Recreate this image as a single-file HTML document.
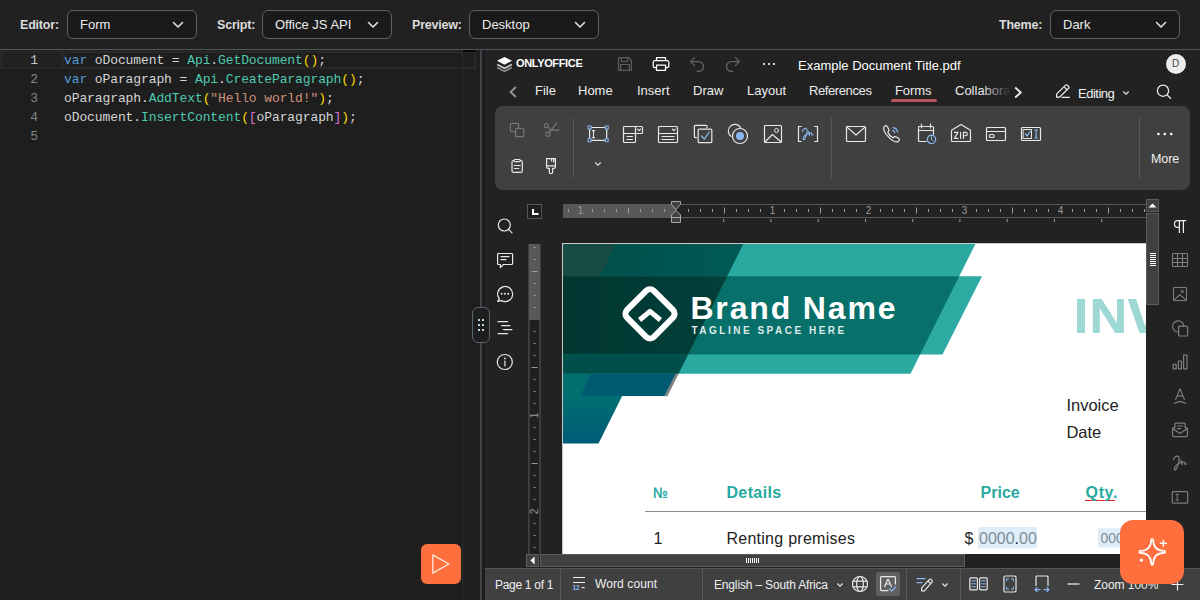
<!DOCTYPE html>
<html>
<head>
<meta charset="utf-8">
<title>ONLYOFFICE Playground</title>
<style>
*{box-sizing:border-box;margin:0;padding:0}
html,body{width:1200px;height:600px;overflow:hidden;background:#212121;font-family:"Liberation Sans",sans-serif;}
.a{position:absolute}
.t{position:absolute;white-space:pre;line-height:1;color:#e6e6e6;font-size:13px}
svg{position:absolute;overflow:visible}
/* top bar */
#topbar{left:0;top:0;width:1200px;height:50px;background:#212121;border-bottom:1px solid #4f565e}
.lbl{font-weight:bold;color:#dcdcdc;font-size:12.5px;letter-spacing:-0.2px;top:19px}
.sel{position:absolute;top:10px;height:29px;width:130px;border:1px solid #5b626a;border-radius:6px;background:#1a1a1a}
.sel .t{left:12px;top:7px;font-size:13px;color:#ececec}
.sel svg{right:12px;top:10px}
/* code */
#code{left:0;top:50px;width:480px;height:550px;background:#1e1e1e}
.ln{position:absolute;margin-top:1px;left:0;width:38px;text-align:right;font-family:"Liberation Mono",monospace;font-size:13px;line-height:19px;color:#858585}
.cl{position:absolute;margin-top:1px;left:64px;font-family:"Liberation Mono",monospace;font-size:13px;letter-spacing:-0.1px;line-height:19px;color:#d4d4d4;white-space:pre}
.k{color:#569cd6}.c{color:#4ec9b0}.y{color:#ffd700}.p{color:#da70d6}.s{color:#ce9178}
/* office */
#office{left:485px;top:50px;width:715px;height:550px;background:#222}

.w{stroke:#e8e8e8;fill:none;stroke-width:1.2;stroke-linecap:round;stroke-linejoin:round}
.d{stroke:#777;fill:none;stroke-width:1.2;stroke-linecap:round;stroke-linejoin:round}
.b{stroke:#8ab8f0;fill:none;stroke-width:1.2;stroke-linecap:round;stroke-linejoin:round}
.tab{font-size:13px;color:#ececec;top:84px}

.g{stroke:#7e7e7e;fill:none;stroke-width:1.2;stroke-linecap:round;stroke-linejoin:round}
.st{font-size:12px;color:#f0f0f0;top:579px}
</style>
</head>
<body>
<!-- TOP BAR -->
<div id="topbar" class="a">
  <div class="t lbl" style="left:20px">Editor:</div>
  <div class="sel" style="left:67px"><div class="t">Form</div><svg width="12" height="8" viewBox="0 0 12 8"><path d="M1.5 1.5 L6 6 L10.5 1.5" fill="none" stroke="#e0e0e0" stroke-width="1.6" stroke-linecap="round" stroke-linejoin="round"/></svg></div>
  <div class="t lbl" style="left:217px">Script:</div>
  <div class="sel" style="left:262px"><div class="t">Office JS API</div><svg width="12" height="8" viewBox="0 0 12 8"><path d="M1.5 1.5 L6 6 L10.5 1.5" fill="none" stroke="#e0e0e0" stroke-width="1.6" stroke-linecap="round" stroke-linejoin="round"/></svg></div>
  <div class="t lbl" style="left:412px">Preview:</div>
  <div class="sel" style="left:469px"><div class="t">Desktop</div><svg width="12" height="8" viewBox="0 0 12 8"><path d="M1.5 1.5 L6 6 L10.5 1.5" fill="none" stroke="#e0e0e0" stroke-width="1.6" stroke-linecap="round" stroke-linejoin="round"/></svg></div>
  <div class="t lbl" style="left:999px">Theme:</div>
  <div class="sel" style="left:1050px"><div class="t">Dark</div><svg width="12" height="8" viewBox="0 0 12 8"><path d="M1.5 1.5 L6 6 L10.5 1.5" fill="none" stroke="#e0e0e0" stroke-width="1.6" stroke-linecap="round" stroke-linejoin="round"/></svg></div>
</div>

<!-- CODE EDITOR -->
<div id="code" class="a">
  <div class="a" style="left:0;top:1px;width:64px;height:18px;border:2px solid #282828;background:#212121"></div>
  <div class="a" style="left:65px;top:1px;width:411px;height:18px;border:2px solid #282828"></div>
  <div class="a" style="left:462px;top:0;width:1px;height:550px;background:#2c2c2c"></div>
  <div class="a" style="left:463px;top:0;width:13px;height:2px;background:#050505"></div>
  <div class="ln" style="top:0;color:#c6c6c6">1</div>
  <div class="ln" style="top:19px">2</div>
  <div class="ln" style="top:38px">3</div>
  <div class="ln" style="top:57px">4</div>
  <div class="ln" style="top:76px">5</div>
  <div class="cl" style="top:0"><span class="k">var</span> oDocument = <span class="c">Api</span>.<span class="c">GetDocument</span><span class="y">()</span>;</div>
  <div class="cl" style="top:19px"><span class="k">var</span> oParagraph = <span class="c">Api</span>.<span class="c">CreateParagraph</span><span class="y">()</span>;</div>
  <div class="cl" style="top:38px">oParagraph.<span class="c">AddText</span><span class="y">(</span><span class="s">"Hello world!"</span><span class="y">)</span>;</div>
  <div class="cl" style="top:57px">oDocument.<span class="c">InsertContent</span><span class="y">(</span><span class="p">[</span>oParagraph<span class="p">]</span><span class="y">)</span>;</div>
  <!-- run button -->
  <div class="a" style="left:421px;top:494px;width:40px;height:40px;background:#ff6f3d;border-radius:6px">
    <svg width="40" height="40" viewBox="0 0 40 40"><path d="M11.8 10.9 L27.9 20 L11.8 29.1 Z" fill="none" stroke="#ffe6dc" stroke-width="1.3" stroke-linejoin="round"/></svg>
  </div>
</div>
<!-- splitter -->
<div class="a" style="left:480px;top:50px;width:2px;height:550px;background:#3e434a"></div>
<div class="a" style="left:482px;top:50px;width:3px;height:550px;background:#1c1c1c"></div>
<div class="a" style="z-index:5;left:472px;top:307px;width:18px;height:36px;border:1px solid #5a6572;border-radius:6px;background:#1e1e1e">
  <svg width="16" height="34" viewBox="0 0 16 34"><g fill="#bcd9de"><rect x="5" y="11" width="2" height="2"/><rect x="9" y="11" width="2" height="2"/><rect x="5" y="16" width="2" height="2"/><rect x="9" y="16" width="2" height="2"/><rect x="5" y="21" width="2" height="2"/><rect x="9" y="21" width="2" height="2"/></g></svg>
</div>


<!-- OFFICE -->
<div id="office" class="a"></div>
<div id="ov" class="a" style="left:0;top:0;width:1200px;height:600px">
<!-- header -->
<svg style="left:496px;top:56px" width="17" height="16" viewBox="0 0 17 16">
  <path d="M8.5 1 L16 4.8 L8.5 8.8 L1 4.8 Z" fill="#fff"/>
  <path d="M1.2 8.6 L8.5 12.3 L15.8 8.6" fill="none" stroke="#cfcfcf" stroke-width="1.7"/>
  <path d="M1.2 11.6 L8.5 15.2 L15.8 11.6" fill="none" stroke="#8c8c8c" stroke-width="1.7"/>
</svg>
<div class="t" style="left:516px;top:58px;font-size:11px;font-weight:bold;letter-spacing:-0.35px;color:#fff">ONLYOFFICE</div>
<!-- save (disabled) -->
<svg style="left:617px;top:56px" width="16" height="16" viewBox="0 0 16 16"><path class="d" style="stroke:#5e5e5e" d="M2.5 1.6 H11.5 L14.4 4.5 V13.4 a1 1 0 0 1 -1 1 H2.5 a1 1 0 0 1 -1 -1 V2.6 a1 1 0 0 1 1 -1 Z M4.5 1.6 V5.5 H10.5 V1.6 M3.6 14.4 V8.5 H12.4 V14.4"/></svg>
<!-- print -->
<svg style="left:652px;top:56px" width="18" height="16" viewBox="0 0 18 16"><path class="w" style="stroke:#fff;stroke-width:1.25" d="M4.5 4.5 V1.7 H13.5 V4.5 M4.5 11.5 H2.8 a1.6 1.6 0 0 1 -1.6 -1.6 V6.2 a1.6 1.6 0 0 1 1.6 -1.6 H15.2 a1.6 1.6 0 0 1 1.6 1.6 V9.9 a1.6 1.6 0 0 1 -1.6 1.6 H13.5 M4.5 9 H13.5 V14.3 H4.5 Z"/></svg>
<!-- undo -->
<svg style="left:689px;top:56px" width="16" height="16" viewBox="0 0 16 16"><path class="d" style="stroke:#666" d="M5.6 1.6 L1.6 5.6 L5.6 9.6 M1.8 5.6 H9.6 a4.9 4.9 0 0 1 0 9.8 H8.2"/></svg>
<!-- redo -->
<svg style="left:725px;top:56px" width="16" height="16" viewBox="0 0 16 16"><path class="d" style="stroke:#666" d="M10.4 1.6 L14.4 5.6 L10.4 9.6 M14.2 5.6 H6.4 a4.9 4.9 0 0 0 0 9.8 H7.8"/></svg>
<!-- dots -->
<svg style="left:761px;top:62px" width="16" height="4" viewBox="0 0 16 4"><circle cx="3" cy="2" r="1.05" fill="#fff"/><circle cx="8" cy="2" r="1.05" fill="#fff"/><circle cx="13" cy="2" r="1.05" fill="#fff"/></svg>
<div class="t" style="left:798px;top:59px;font-size:13px;color:#fff">Example Document Title.pdf</div>
<div class="a" style="left:1166px;top:54px;width:20px;height:20px;border-radius:10px;background:#ededed"></div>
<div class="t" style="left:1172px;top:59px;font-size:10px;color:#444">D</div>
<!-- tabs -->
<svg style="left:508px;top:85px" width="10" height="14" viewBox="0 0 10 14"><path d="M8 2 L2.5 7 L8 12" fill="none" stroke="#9a9a9a" stroke-width="1.7"/></svg>
<div class="t tab" style="left:535px">File</div>
<div class="t tab" style="left:578px">Home</div>
<div class="t tab" style="left:637px">Insert</div>
<div class="t tab" style="left:693px">Draw</div>
<div class="t tab" style="left:747px">Layout</div>
<div class="t tab" style="left:809px;letter-spacing:-0.4px">References</div>
<div class="t tab" style="left:895px;letter-spacing:-0.1px">Forms</div>
<div class="a" style="left:891px;top:99px;width:46px;height:3px;border-radius:1.5px;background:#b9555f"></div>
<div class="a" style="left:955px;top:80px;width:56px;height:22px;overflow:hidden"><div class="t tab" style="left:0;top:4px">Collaboration</div><div class="a" style="left:26px;top:0;width:30px;height:22px;background:linear-gradient(90deg,rgba(34,34,34,0),rgba(34,34,34,0.85) 85%,#222)"></div></div>
<svg style="left:1013px;top:86px" width="10" height="13" viewBox="0 0 10 13"><path d="M2.2 1.5 L7.8 6.5 L2.2 11.5" fill="none" stroke="#f0f0f0" stroke-width="1.8"/></svg>
<!-- editing -->
<svg style="left:1055px;top:83px" width="16" height="16" viewBox="0 0 16 16"><path class="w" style="stroke:#f0f0f0;stroke-width:1.2" d="M1.6 14.2 V11.2 L10.6 2.2 a1.2 1.2 0 0 1 1.7 0 L13.6 3.5 a1.2 1.2 0 0 1 0 1.7 L4.6 14.2 Z M9 3.8 L12 6.8 M7 14.3 H14.5"/></svg>
<div class="t" style="left:1078px;top:87px;font-size:13px;letter-spacing:-0.5px;color:#f0f0f0">Editing</div>
<svg style="left:1122px;top:90px" width="8" height="6" viewBox="0 0 8 6"><path d="M1.3 1.5 L4 4.2 L6.7 1.5" fill="none" stroke="#e0e0e0" stroke-width="1.3"/></svg>
<svg style="left:1155px;top:83px" width="18" height="18" viewBox="0 0 18 18"><circle cx="8" cy="7.7" r="5.6" fill="none" stroke="#f0f0f0" stroke-width="1.3"/><path d="M12 11.8 L16 15.8" stroke="#f0f0f0" stroke-width="1.3" fill="none"/></svg>
<!-- toolbar panel -->
<div class="a" style="left:495px;top:106px;width:695px;height:84px;border-radius:8px;background:#404040"></div>
<div class="a" style="left:573px;top:118px;width:1px;height:60px;background:#585858"></div>
<div class="a" style="left:831px;top:118px;width:1px;height:60px;background:#585858"></div>
<div class="a" style="left:1139px;top:118px;width:1px;height:60px;background:#585858"></div>
<!-- copy (disabled) -->
<svg style="left:509px;top:122px" width="16" height="16" viewBox="0 0 16 16"><path class="d" d="M6.5 9.6 H2.4 a1 1 0 0 1 -1 -1 V2.4 a1 1 0 0 1 1 -1 H8.6 a1 1 0 0 1 1 1 V6.3"/><rect class="d" x="6.6" y="6.5" width="8.2" height="8.2" rx="1"/></svg>
<!-- cut (disabled) -->
<svg style="left:543px;top:122px" width="17" height="16" viewBox="0 0 17 16"><circle class="d" cx="3.3" cy="3.6" r="2.1"/><circle class="d" cx="5" cy="12.3" r="2.1"/><path class="d" d="M5 5 L7.6 8.4 M6.2 10.6 L13.5 1.2 M9 8.2 H16"/></svg>
<!-- paste -->
<svg style="left:510px;top:158px" width="15" height="16" viewBox="0 0 15 16"><rect class="w" x="2" y="2.5" width="10.3" height="11.9" rx="1.6"/><rect class="w" x="3.9" y="1.5" width="6.5" height="2.2" rx="1.1" style="fill:#404040"/><path class="w" d="M4.4 7.5 H10.2 M4.4 10.5 H8.8"/></svg>
<!-- format painter -->
<svg style="left:544px;top:157px" width="14" height="18" viewBox="0 0 14 18"><path class="w" d="M2.6 1.7 H11.4 V10 a1.3 1.3 0 0 1 -1.3 1.3 H8.6 V15.4 a1.1 1.1 0 0 1 -1.1 1.1 H6.5 a1.1 1.1 0 0 1 -1.1 -1.1 V11.3 H3.9 a1.3 1.3 0 0 1 -1.3 -1.3 Z M2.6 8.8 H11.4 M7.6 1.7 V4 M9.7 1.7 V5"/></svg>
<!-- text field -->
<svg style="left:587px;top:125px" width="22" height="18" viewBox="0 0 22 18"><rect class="w" x="2.6" y="2.5" width="17.1" height="12.8"/><path class="w" style="stroke-width:1.1" d="M5.3 5.6 H7.7 M6.5 5.6 V12.8 M5.3 12.8 H7.7"/><g class="b" style="fill:#404040;stroke-width:1;stroke-linejoin:miter"><rect x="1.1" y="1" width="3" height="3"/><rect x="18.2" y="1" width="3" height="3"/><rect x="1.1" y="13.8" width="3" height="3"/><rect x="18.2" y="13.8" width="3" height="3"/></g></svg>
<svg style="left:594px;top:161px" width="8" height="6" viewBox="0 0 8 6"><path d="M1.2 1.4 L4 4.2 L6.8 1.4" fill="none" stroke="#e0e0e0" stroke-width="1.3"/></svg>
<!-- combo box -->
<svg style="left:622px;top:125px" width="22" height="19" viewBox="0 0 22 19"><path class="w" d="M2.5 1.5 H19.5 a1 1 0 0 1 1 1 V7.5 a1 1 0 0 1 -1 1 H2.5 a1 1 0 0 1 -1 -1 V2.5 a1 1 0 0 1 1 -1 Z M13.5 1.5 V8.5 M15.6 4.2 L17.1 5.7 L18.6 4.2 M1.5 8 V16.5 a1 1 0 0 0 1 1 H12.5 a1 1 0 0 0 1 -1 V8.5 M5 11.5 H10.5 M5 14.5 H10.5"/></svg>
<!-- dropdown -->
<svg style="left:657px;top:125px" width="22" height="19" viewBox="0 0 22 19"><path class="w" d="M2.5 1.5 H19.5 a1 1 0 0 1 1 1 V7.5 a1 1 0 0 1 -1 1 H2.5 a1 1 0 0 1 -1 -1 V2.5 a1 1 0 0 1 1 -1 Z M15.4 4.2 L16.9 5.7 L18.4 4.2 M1.5 8 V16.5 a1 1 0 0 0 1 1 H19.5 a1 1 0 0 0 1 -1 V8 M5 11.5 H17 M5 14.5 H17"/></svg>
<!-- checkbox -->
<svg style="left:693px;top:124px" width="20" height="20" viewBox="0 0 20 20"><path class="w" d="M3.6 13.6 H2.4 a1 1 0 0 1 -1 -1 V2.3 a1 1 0 0 1 1 -1 H13 a1 1 0 0 1 1 1 V3.6"/><rect class="w" x="5.2" y="5.1" width="13.6" height="13.6" rx="1"/><path class="b" d="M8.4 12 L11.3 15.2 L16.2 8"/></svg>
<!-- radio -->
<svg style="left:727px;top:123px" width="22" height="22" viewBox="0 0 22 22"><path class="w" d="M4.2 13.4 A6.6 6.6 0 1 1 13.6 4.6"/><circle class="w" cx="13" cy="13" r="7.5"/><circle cx="13" cy="13" r="4" fill="#8ab8f0"/></svg>
<!-- image -->
<svg style="left:763px;top:124px" width="20" height="20" viewBox="0 0 20 20"><rect class="w" x="1.5" y="1.5" width="17" height="17" rx="1"/><circle class="w" style="stroke-width:1" cx="13.5" cy="6.5" r="2"/><path class="w" d="M2.5 17.5 L9.3 10.5 L17.6 17.5"/></svg>
<!-- signature -->
<svg style="left:797px;top:125px" width="22" height="18" viewBox="0 0 22 18"><path class="w" d="M4.2 1.5 H1.5 V16.5 H4.2 M17.8 1.5 H20.5 V16.5 H17.8"/><path class="b" style="stroke-width:1.1" d="M5.4 6.4 C5.8 4 8.6 2.6 9.6 4 C10.8 5.8 9.4 10.6 8 13.4 C7.2 15 6 15 6.2 13.4 C6.6 10.8 10 8.8 12.4 8 M11.6 6.4 L12.4 10.6 M12.6 8.6 C13.6 7.4 14.8 7.6 14.6 9 C14.6 10 15.4 10.2 16 9.6"/></svg>
<!-- email -->
<svg style="left:845px;top:125px" width="22" height="18" viewBox="0 0 22 18"><rect class="w" x="1.5" y="1.5" width="19" height="15" rx="1"/><path class="w" d="M2.3 2.4 L11 10 L19.7 2.4"/></svg>
<!-- phone -->
<svg style="left:881px;top:124px" width="20" height="20" viewBox="0 0 20 20"><path class="w" d="M3.2 2.6 C4.6 1.2 5.6 1.4 6.4 2.8 L7.8 5.4 C8.4 6.6 8 7.2 6.8 8.2 C7.6 10.4 9.6 12.6 12 13.8 C13 12.6 13.6 12.2 14.8 12.8 L17.4 14.2 C18.8 15 18.8 16 17.6 17.2 C13.6 20.6 0.4 8.4 3.2 2.6 Z"/><path class="b" d="M11.6 6.4 C12.8 6.6 13.6 7.4 13.8 8.6 M12.2 3.6 C14.6 4 16.2 5.6 16.6 8"/></svg>
<!-- date -->
<svg style="left:917px;top:123px" width="20" height="22" viewBox="0 0 20 22"><path class="w" d="M9.4 18.5 H2.5 a1 1 0 0 1 -1 -1 V4.5 a1 1 0 0 1 1 -1 H15.5 a1 1 0 0 1 1 1 V11.2 M1.5 7.5 H16.5 M4.5 1.2 V5 M13.5 1.2 V5"/><circle class="b" cx="14.5" cy="16.3" r="4.2"/><path class="b" style="stroke-width:1" d="M14.5 13.9 V16.5 L16.1 17.5"/></svg>
<!-- zip -->
<svg style="left:950px;top:123px" width="22" height="20" viewBox="0 0 22 20"><path class="w" d="M1.5 7.2 L11 1.5 L20.5 7.2 V17.5 a1 1 0 0 1 -1 1 H2.5 a1 1 0 0 1 -1 -1 Z"/><path class="w" style="stroke-width:1.1" d="M4.4 9.4 H8 L4.4 15.4 H8 M10.6 9.4 V15.4 M13.4 15.4 V9.4 H15.6 a1.7 1.7 0 0 1 0 3.4 H13.4"/></svg>
<!-- credit card -->
<svg style="left:985px;top:126px" width="22" height="16" viewBox="0 0 22 16"><rect class="w" x="1.5" y="1.5" width="19" height="13" rx="1"/><path class="w" d="M1.5 5.5 H20.5"/><rect class="w" x="4.5" y="8.5" width="4.5" height="3" rx="1"/></svg>
<!-- complex -->
<svg style="left:1020px;top:126px" width="22" height="16" viewBox="0 0 22 16"><rect class="w" x="1.5" y="1.5" width="19" height="13" rx="1"/><rect class="w" style="stroke-width:1" x="3.5" y="3.5" width="8" height="9"/><path class="b" d="M5.4 8 L7.2 10 L10.2 5.6 M14.8 4 H17.4 M16.1 4 V12 M14.8 12 H17.4"/></svg>
<!-- more -->
<svg style="left:1156px;top:132px" width="18" height="4" viewBox="0 0 18 4"><circle cx="2.4" cy="2" r="1.3" fill="#fff"/><circle cx="8.8" cy="2" r="1.3" fill="#fff"/><circle cx="15.2" cy="2" r="1.3" fill="#fff"/></svg>
<div class="t" style="left:1151px;top:152.5px;font-size:12.5px;letter-spacing:-0.1px;color:#f0f0f0">More</div>

<!-- document page -->
<div class="a" style="left:562px;top:243px;width:584px;height:311px;background:#fff;overflow:hidden;border-left:1px solid #c8c8c8;border-top:1px solid #c8c8c8"></div>
<svg style="left:0;top:0" width="1200" height="600" viewBox="0 0 1200 600">
 <defs>
  <clipPath id="pg"><rect x="563" y="244" width="583" height="310"/></clipPath>
  <linearGradient id="gd" x1="0" y1="0" x2="0" y2="1"><stop offset="0" stop-color="#007a76"/><stop offset="0.5" stop-color="#006a72"/><stop offset="1" stop-color="#005a76"/></linearGradient>
  <linearGradient id="g2" x1="0" y1="0" x2="1" y2="0"><stop offset="0" stop-color="#004c48"/><stop offset="1" stop-color="#005a55"/></linearGradient>
  <linearGradient id="g3" x1="0" y1="0" x2="1" y2="0"><stop offset="0" stop-color="#013631"/><stop offset="1" stop-color="#024039"/></linearGradient>
 </defs>
 <g clip-path="url(#pg)">
  <!-- band (on white) -->
  <polygon points="563,276.2 982,276.2 942.5,354.5 563,354.5" fill="#2daaa1"/>
  <!-- A light teal -->
  <polygon points="563,244 975.4,244 910.5,373.7 563,373.7" fill="#29a9a0"/>
  <!-- band over A -->
  <polygon points="563,276.2 959.2,276.2 920.1,354.5 563,354.5" fill="#08706a"/>
  <!-- lower-left gradient shape -->
  <polygon points="563,373.7 633.2,373.7 598.5,443.6 563,443.6" fill="url(#gd)"/>
  <!-- shadow -->
  <polygon points="675,373.7 678.6,373.7 667.4,396.2 664.6,396.2" fill="#7f8383"/>
  <!-- blue part under overlay -->
  <polygon points="563,373.7 675.6,373.7 664.6,396 563,396" fill="#005a72"/>
  <polygon points="563,373.7 591,373.7 580.4,396 563,396" fill="#006f6d"/>
  <!-- dark overlay over A top strip -->
  <polygon points="563,244 743.3,244 727.2,276.2 563,276.2" fill="url(#g2)"/>
  <polygon points="563,244 615.5,244 600,276.2 563,276.2" fill="#164b46"/>
  <!-- dark overlay over band -->
  <polygon points="563,276.2 727.2,276.2 688.1,354.5 563,354.5" fill="url(#g3)"/>
  <!-- dark overlay over A bottom strip -->
  <polygon points="563,354.5 688.1,354.5 678.5,373.7 563,373.7" fill="#004f4b"/>
  <!-- logo -->
  <rect x="-19" y="-19" width="38" height="38" rx="5.5" transform="translate(650,313.8) rotate(45)" fill="none" stroke="#fff" stroke-width="6"/>
  <path d="M639.6 320 L650 311.4 L660.4 320" fill="none" stroke="#fff" stroke-width="5" stroke-linejoin="round"/>
  <!-- INV -->
  <g fill="#9ed8d4">
   <rect x="1077" y="298.9" width="8" height="34"/>
   <path d="M1092.8 298.9 H1101.6 L1117 323 V298.9 H1123.9 V332.9 H1115.2 L1099.8 308.6 V332.9 H1092.8 Z"/>
   <path d="M1127.6 298.9 H1136.1 L1145 326 L1153.9 298.9 H1162 L1150 332.9 H1139.6 Z"/>
  </g>
  <!-- table line -->
  <rect x="645" y="511" width="520" height="1" fill="#8c8c8c"/>
  <!-- form field bgs -->
  <rect x="978" y="527" width="59" height="21.4" fill="#ddeefa"/>
  <rect x="1098" y="528.2" width="50" height="19.4" fill="#ddeefa"/>
  <rect x="1085" y="500" width="30" height="1" fill="#e8202a"/>
 </g>
</svg>
<div class="a" style="left:563px;top:244px;width:583px;height:310px;overflow:hidden">
 <div class="t" id="brand" style="left:127.4px;top:47.8px;font-size:32px;font-weight:bold;letter-spacing:1.85px;color:#fff">Brand Name</div>
 <div class="t" id="tag" style="left:128.5px;top:82px;font-size:10px;font-weight:bold;letter-spacing:2.5px;color:#dfeae8">TAGLINE SPACE HERE</div>
 <div class="t" style="left:503.4px;top:152.6px;font-size:16.5px;color:#222">Invoice</div>
 <div class="t" style="left:503.4px;top:180.3px;font-size:16.5px;color:#222">Date</div>
 <div class="t" style="left:90.4px;top:240.7px;font-size:15.5px;font-weight:bold;color:#29a9a0;transform-origin:0 0;transform:scaleX(0.86)">№</div>
 <div class="t" style="left:163.4px;top:240.7px;font-size:16px;font-weight:bold;letter-spacing:0.4px;color:#29a9a0">Details</div>
 <div class="t" style="left:417.6px;top:240.7px;font-size:16px;font-weight:bold;color:#29a9a0">Price</div>
 <div class="t" style="left:522.6px;top:240.7px;font-size:16px;font-weight:bold;letter-spacing:0.6px;color:#29a9a0">Qty.</div>
 <div class="t" style="left:90.6px;top:286.8px;font-size:16px;color:#222">1</div>
 <div class="t" style="left:163.4px;top:286.8px;font-size:16px;letter-spacing:0.27px;color:#222">Renting premises</div>
 <div class="t" style="left:401.4px;top:286.8px;font-size:16px;color:#222">$</div>
 <div class="t" style="left:416px;top:286.8px;font-size:16px;color:#7f8d95">0000<span style="color:#222">.</span>00</div>
 <div class="t" style="left:537.4px;top:286.5px;font-size:14px;color:#7f8d95">0000</div>
</div>


<!-- rulers -->
<div class="a" style="left:527px;top:204px;width:15px;height:15px;border:1px solid #555;background:#1e1e1e"></div>
<svg style="left:0;top:0" width="1200" height="600" viewBox="0 0 1200 600">
  <path d="M533 209 V214 H538.5" fill="none" stroke="#fff" stroke-width="2"/>
  <rect x="563" y="204" width="113.5" height="14" fill="#585858"/>
  <path d="M676.5 204.5 H1146 M676.5 217.5 H1146" fill="none" stroke="#585858" stroke-width="1"/>
  <rect x="568.0" y="209" width="1" height="3" fill="#9a9a9a"/><rect x="592.0" y="209" width="1" height="3" fill="#9a9a9a"/><rect x="604.0" y="209" width="1" height="3" fill="#9a9a9a"/><rect x="616.0" y="209" width="1" height="3" fill="#9a9a9a"/><rect x="628.0" y="207.5" width="1" height="6" fill="#9a9a9a"/><rect x="640.0" y="209" width="1" height="3" fill="#9a9a9a"/><rect x="652.0" y="209" width="1" height="3" fill="#9a9a9a"/><rect x="664.0" y="209" width="1" height="3" fill="#9a9a9a"/><rect x="688.0" y="209" width="1" height="3" fill="#9a9a9a"/><rect x="700.0" y="209" width="1" height="3" fill="#9a9a9a"/><rect x="712.0" y="209" width="1" height="3" fill="#9a9a9a"/><rect x="724.0" y="207.5" width="1" height="6" fill="#9a9a9a"/><rect x="736.0" y="209" width="1" height="3" fill="#9a9a9a"/><rect x="748.0" y="209" width="1" height="3" fill="#9a9a9a"/><rect x="760.0" y="209" width="1" height="3" fill="#9a9a9a"/><rect x="784.0" y="209" width="1" height="3" fill="#9a9a9a"/><rect x="796.0" y="209" width="1" height="3" fill="#9a9a9a"/><rect x="808.0" y="209" width="1" height="3" fill="#9a9a9a"/><rect x="820.0" y="207.5" width="1" height="6" fill="#9a9a9a"/><rect x="832.0" y="209" width="1" height="3" fill="#9a9a9a"/><rect x="844.0" y="209" width="1" height="3" fill="#9a9a9a"/><rect x="856.0" y="209" width="1" height="3" fill="#9a9a9a"/><rect x="880.0" y="209" width="1" height="3" fill="#9a9a9a"/><rect x="892.0" y="209" width="1" height="3" fill="#9a9a9a"/><rect x="904.0" y="209" width="1" height="3" fill="#9a9a9a"/><rect x="916.0" y="207.5" width="1" height="6" fill="#9a9a9a"/><rect x="928.0" y="209" width="1" height="3" fill="#9a9a9a"/><rect x="940.0" y="209" width="1" height="3" fill="#9a9a9a"/><rect x="952.0" y="209" width="1" height="3" fill="#9a9a9a"/><rect x="976.0" y="209" width="1" height="3" fill="#9a9a9a"/><rect x="988.0" y="209" width="1" height="3" fill="#9a9a9a"/><rect x="1000.0" y="209" width="1" height="3" fill="#9a9a9a"/><rect x="1012.0" y="207.5" width="1" height="6" fill="#9a9a9a"/><rect x="1024.0" y="209" width="1" height="3" fill="#9a9a9a"/><rect x="1036.0" y="209" width="1" height="3" fill="#9a9a9a"/><rect x="1048.0" y="209" width="1" height="3" fill="#9a9a9a"/><rect x="1072.0" y="209" width="1" height="3" fill="#9a9a9a"/><rect x="1084.0" y="209" width="1" height="3" fill="#9a9a9a"/><rect x="1096.0" y="209" width="1" height="3" fill="#9a9a9a"/><rect x="1108.0" y="207.5" width="1" height="6" fill="#9a9a9a"/><rect x="1120.0" y="209" width="1" height="3" fill="#9a9a9a"/><rect x="1132.0" y="209" width="1" height="3" fill="#9a9a9a"/><rect x="1144.0" y="209" width="1" height="3" fill="#9a9a9a"/><text x="580.5" y="214.3" font-size="10" fill="#9a9a9a" text-anchor="middle" font-family="Liberation Sans">1</text><text x="772.5" y="214.3" font-size="10" fill="#9a9a9a" text-anchor="middle" font-family="Liberation Sans">1</text><text x="868.5" y="214.3" font-size="10" fill="#9a9a9a" text-anchor="middle" font-family="Liberation Sans">2</text><text x="964.5" y="214.3" font-size="10" fill="#9a9a9a" text-anchor="middle" font-family="Liberation Sans">3</text><text x="1060.5" y="214.3" font-size="10" fill="#9a9a9a" text-anchor="middle" font-family="Liberation Sans">4</text>
  <rect x="723.2" y="219" width="1" height="3" fill="#9a9a9a"/><rect x="770.5" y="219" width="1" height="3" fill="#9a9a9a"/><rect x="817.7" y="219" width="1" height="3" fill="#9a9a9a"/><rect x="865.0" y="219" width="1" height="3" fill="#9a9a9a"/><rect x="912.2" y="219" width="1" height="3" fill="#9a9a9a"/><rect x="959.4" y="219" width="1" height="3" fill="#9a9a9a"/><rect x="1006.7" y="219" width="1" height="3" fill="#9a9a9a"/><rect x="1053.9" y="219" width="1" height="3" fill="#9a9a9a"/><rect x="1101.2" y="219" width="1" height="3" fill="#9a9a9a"/>
  <path d="M671.5 201.5 H680.5 V204.5 L676 209.5 L671.5 204.5 Z M676 210.5 L680.5 215 V222.5 H671.5 V215 Z M671.5 217.5 H680.5" fill="#404040" stroke="#a8a8a8" stroke-width="1" stroke-linejoin="round"/>
  <rect x="528.5" y="244" width="12" height="75.5" fill="#585858"/>
  <path d="M529 554 V319.5 H540 V554" fill="#1f1f1f" stroke="#585858" stroke-width="1"/>
  <rect x="533.5" y="247.0" width="2" height="1" fill="#9a9a9a"/><rect x="533.5" y="259.0" width="2" height="1" fill="#9a9a9a"/><rect x="531.5" y="271.0" width="6" height="1" fill="#9a9a9a"/><rect x="533.5" y="283.0" width="2" height="1" fill="#9a9a9a"/><rect x="533.5" y="295.0" width="2" height="1" fill="#9a9a9a"/><rect x="533.5" y="307.0" width="2" height="1" fill="#9a9a9a"/><rect x="533.5" y="331.0" width="2" height="1" fill="#9a9a9a"/><rect x="533.5" y="343.0" width="2" height="1" fill="#9a9a9a"/><rect x="533.5" y="355.0" width="2" height="1" fill="#9a9a9a"/><rect x="531.5" y="367.0" width="6" height="1" fill="#9a9a9a"/><rect x="533.5" y="379.0" width="2" height="1" fill="#9a9a9a"/><rect x="533.5" y="391.0" width="2" height="1" fill="#9a9a9a"/><rect x="533.5" y="403.0" width="2" height="1" fill="#9a9a9a"/><text x="0" y="0" transform="translate(537.6,415.5) rotate(-90)" font-size="10" fill="#9a9a9a" text-anchor="middle" font-family="Liberation Sans">1</text><rect x="533.5" y="427.0" width="2" height="1" fill="#9a9a9a"/><rect x="533.5" y="439.0" width="2" height="1" fill="#9a9a9a"/><rect x="533.5" y="451.0" width="2" height="1" fill="#9a9a9a"/><rect x="531.5" y="463.0" width="6" height="1" fill="#9a9a9a"/><rect x="533.5" y="475.0" width="2" height="1" fill="#9a9a9a"/><rect x="533.5" y="487.0" width="2" height="1" fill="#9a9a9a"/><rect x="533.5" y="499.0" width="2" height="1" fill="#9a9a9a"/><text x="0" y="0" transform="translate(537.6,511.5) rotate(-90)" font-size="10" fill="#9a9a9a" text-anchor="middle" font-family="Liberation Sans">2</text><rect x="533.5" y="523.0" width="2" height="1" fill="#9a9a9a"/><rect x="533.5" y="535.0" width="2" height="1" fill="#9a9a9a"/><rect x="533.5" y="547.0" width="2" height="1" fill="#9a9a9a"/>
</svg>
<!-- left sidebar -->
<svg style="left:496px;top:217px" width="18" height="18" viewBox="0 0 18 18"><circle class="w" cx="8.3" cy="8" r="6"/><path class="w" d="M12.6 12.4 L16 15.8"/></svg>
<svg style="left:496px;top:252px" width="18" height="17" viewBox="0 0 18 17"><path class="w" d="M2.6 1.5 H15.6 a1 1 0 0 1 1 1 V11.5 a1 1 0 0 1 -1 1 H7.4 L4.4 15.6 V12.5 H2.6 a1 1 0 0 1 -1 -1 V2.5 a1 1 0 0 1 1 -1 Z M5 4.6 H13 M5 7.6 H10"/></svg>
<svg style="left:496px;top:285px" width="18" height="18" viewBox="0 0 18 18"><path class="w" d="M3.4 13.8 A7.5 7.5 0 1 1 5.6 15.6 L1.6 16.4 Z"/><circle cx="5.6" cy="8.7" r="1" fill="#e8e8e8"/><circle cx="8.9" cy="8.7" r="1" fill="#e8e8e8"/><circle cx="12.2" cy="8.7" r="1" fill="#e8e8e8"/></svg>
<svg style="left:496px;top:320px" width="18" height="16" viewBox="0 0 18 16"><path class="w" d="M2 1.7 H11.6 M5.6 5.6 H14 M7.4 9.6 H16 M2 13.6 H11.6"/></svg>
<svg style="left:496px;top:353px" width="18" height="18" viewBox="0 0 18 18"><circle class="w" cx="8.8" cy="9" r="7.5"/><path class="w" d="M8.9 8 V13"/><circle cx="8.9" cy="5.4" r="0.9" fill="#e8e8e8"/></svg>
<!-- vertical scrollbar -->
<div class="a" style="left:1146px;top:199px;width:13px;height:13px;background:#404040;border:1px solid #5c5c5c"></div>
<svg style="left:1148px;top:203px" width="9" height="5" viewBox="0 0 9 5"><path d="M0.5 4.6 L4.5 0.4 L8.5 4.6 Z" fill="#fff"/></svg>
<div class="a" style="left:1146px;top:213px;width:13px;height:92px;background:#404040;border:1px solid #5c5c5c"></div>
<svg style="left:1150px;top:253px" width="6" height="14" viewBox="0 0 6 14"><path d="M0 0.5 H6 M0 2.5 H6 M0 4.5 H6 M0 6.5 H6 M0 8.5 H6 M0 10.5 H6 M0 12.5 H6" stroke="#fff" stroke-width="1" shape-rendering="crispEdges"/></svg>
<!-- right sidebar -->
<svg style="left:1172px;top:219px" width="16" height="16" viewBox="0 0 16 16"><path d="M7.4 14 V1.6 M11.4 14 V1.6 M14.2 1.6 H5.8 a3.4 3.4 0 0 0 0 6.8 H7.4" fill="none" stroke="#f0f0f0" stroke-width="1.2"/></svg>
<svg style="left:1171px;top:252px" width="18" height="16" viewBox="0 0 18 16"><path class="g" style="stroke-width:1.1" d="M2.5 1.5 H15.5 a1 1 0 0 1 1 1 V13.5 a1 1 0 0 1 -1 1 H2.5 a1 1 0 0 1 -1 -1 V2.5 a1 1 0 0 1 1 -1 Z M1.5 6.5 H16.5 M1.5 10.5 H16.5 M6.5 1.5 V14.5 M11.5 1.5 V14.5"/></svg>
<svg style="left:1172px;top:286px" width="16" height="16" viewBox="0 0 16 16"><rect class="g" style="stroke-width:1.1" x="1.5" y="1.5" width="13" height="13" rx="1"/><circle class="g" style="stroke-width:1" cx="10.2" cy="5.5" r="1.3"/><path class="g" style="stroke-width:1.1" d="M2.3 13.6 L7.7 8.8 L13.7 13.6"/></svg>
<svg style="left:1171px;top:320px" width="18" height="18" viewBox="0 0 18 18"><path class="g" d="M7.6 12 A5.6 5.6 0 1 1 12.8 6.2"/><rect class="g" x="7.6" y="6.2" width="9" height="9.8" rx="1"/></svg>
<svg style="left:1172px;top:354px" width="16" height="16" viewBox="0 0 16 16"><rect class="g" x="1.2" y="10.4" width="3" height="4.4"/><rect class="g" x="6.4" y="7" width="3" height="7.8"/><rect class="g" x="11.6" y="1.2" width="3.4" height="13.6"/></svg>
<svg style="left:1172px;top:387px" width="16" height="18" viewBox="0 0 16 18"><path class="g" d="M3.6 12.6 L8 1.6 L12.4 12.6 M5.2 8.8 H10.8 M2.4 16.4 Q8 13 13.6 16.4"/></svg>
<svg style="left:1171px;top:422px" width="18" height="16" viewBox="0 0 18 16"><path class="g" d="M3.8 6 V2.2 a1 1 0 0 1 1 -1 H13.2 a1 1 0 0 1 1 1 V6 M1.6 6.4 L3.8 5 M16.4 6.4 L14.2 5 M1.6 6.4 V13.6 a1 1 0 0 0 1 1 H15.4 a1 1 0 0 0 1 -1 V6.4 L9 11.4 Z M6.4 4 H11.6 M6.4 6.6 H9.6"/></svg>
<svg style="left:1172px;top:454px" width="16" height="18" viewBox="0 0 16 18"><path class="g" d="M1.6 5.6 C2.2 2.4 6 1 6.8 3 C7.8 5.4 6.2 11.6 4.4 14.8 C3.4 16.6 2 16.4 2.4 14.4 C3 11.4 7 9 10 8 M9 6.2 L10 11 M10.2 8.8 C11.2 7.4 12.8 7.6 12.6 9.2 C12.6 10.4 13.6 10.6 14.6 9.8"/></svg>
<svg style="left:1171px;top:490px" width="18" height="15" viewBox="0 0 18 15"><rect class="g" x="1.3" y="1.6" width="15.4" height="11.6" rx="1"/><path class="g" style="stroke-width:1" d="M5 4.6 H7.4 M6.2 4.6 V10.2 M5 10.2 H7.4"/></svg>
<!-- h scrollbar -->
<div class="a" style="left:526px;top:554px;width:13px;height:13px;background:#404040;border:1px solid #5c5c5c"></div>
<svg style="left:530px;top:556px" width="5" height="9" viewBox="0 0 5 9"><path d="M4.6 0.5 L0.4 4.5 L4.6 8.5 Z" fill="#fff"/></svg>
<div class="a" style="left:540px;top:554px;width:425px;height:13px;background:#404040;border:1px solid #5c5c5c"></div>
<svg style="left:746px;top:558px" width="14" height="5" viewBox="0 0 14 5"><path d="M0.5 0 V5 M2.5 0 V5 M4.5 0 V5 M6.5 0 V5 M8.5 0 V5 M10.5 0 V5 M12.5 0 V5" stroke="#fff" stroke-width="1" shape-rendering="crispEdges"/></svg>
<!-- status bar -->
<div class="a" style="left:485px;top:568px;width:715px;height:32px;background:#404040;border-top:1px solid #555"></div>
<div class="a" style="left:560px;top:569px;width:1px;height:31px;background:#5a5a5a"></div>
<div class="a" style="left:702px;top:569px;width:1px;height:31px;background:#5a5a5a"></div>
<div class="a" style="left:906px;top:569px;width:1px;height:31px;background:#5a5a5a"></div>
<div class="a" style="left:960px;top:569px;width:1px;height:31px;background:#5a5a5a"></div>
<div class="t st" style="left:495px;letter-spacing:-0.3px">Page 1 of 1</div>
<svg style="left:572px;top:575px" width="14" height="16" viewBox="0 0 14 16"><path d="M1 2.5 H13 M1 7.5 H13" stroke="#f0f0f0" stroke-width="1" fill="none"/><text x="0.4" y="15" font-size="6.5" font-family="Liberation Sans" font-weight="bold" fill="#8ab8f0">12</text><path d="M9.6 12.6 H12.6" stroke="#f0f0f0" stroke-width="1.2"/></svg>
<div class="t st" style="left:595px;letter-spacing:0.1px;top:578px">Word count</div>
<div class="t st" style="left:714px;letter-spacing:-0.16px">English – South Africa</div>
<svg style="left:836px;top:582px" width="8" height="6" viewBox="0 0 8 6"><path d="M1.3 1.5 L4 4.2 L6.7 1.5" fill="none" stroke="#e0e0e0" stroke-width="1.3"/></svg>
<svg style="left:851px;top:575px" width="18" height="18" viewBox="0 0 18 18"><circle class="w" cx="9" cy="9" r="7.5"/><ellipse class="w" cx="9" cy="9" rx="3.4" ry="7.5"/><path class="w" d="M2.2 6.2 H15.8 M2.2 11.8 H15.8"/></svg>
<div class="a" style="left:876px;top:572px;width:24px;height:24px;border-radius:3px;background:#606060"></div>
<svg style="left:879px;top:575px" width="18" height="18" viewBox="0 0 18 18"><path class="w" d="M9 15.6 H2.6 a1 1 0 0 1 -1 -1 V2.6 a1 1 0 0 1 1 -1 H15.4 a1 1 0 0 1 1 1 V9 M5.6 11.6 L9 4 L12.4 11.6 M6.8 9 H11.2"/><path class="b" d="M10.6 14 L12.8 16.2 L16.6 11.8"/></svg>
<svg style="left:916px;top:575px" width="18" height="18" viewBox="0 0 18 18"><path class="b" d="M1 3.6 H9 M1 7.6 H6"/><path class="w" d="M5.6 15.8 V12.8 L13.4 4.4 a1.2 1.2 0 0 1 1.7 0 L16 5.4 a1.2 1.2 0 0 1 0 1.7 L8.4 15.8 Z M12 6 L14.6 8.6"/></svg>
<svg style="left:941px;top:582px" width="8" height="6" viewBox="0 0 8 6"><path d="M1.3 1.5 L4 4.2 L6.7 1.5" fill="none" stroke="#e0e0e0" stroke-width="1.3"/></svg>
<svg style="left:969px;top:577px" width="19" height="14" viewBox="0 0 19 14"><rect class="w" x="0.8" y="0.8" width="7.6" height="12" rx="1"/><rect class="w" x="10.6" y="0.8" width="7.6" height="12" rx="1"/><path class="b" style="stroke-width:1" d="M2.8 3.8 H6.4 M2.8 6.8 H6.4 M2.8 9.8 H6.4 M12.6 3.8 H16.2 M12.6 6.8 H16.2 M12.6 9.8 H16.2"/></svg>
<svg style="left:1003px;top:575px" width="14" height="18" viewBox="0 0 14 18"><rect class="w" x="1" y="1" width="12" height="16" rx="1.2"/><path class="b" style="stroke-width:1" d="M3.6 6 V3.8 H5.6 M8.4 3.8 H10.4 V6 M3.6 12 V14.2 H5.6 M8.4 14.2 H10.4 V12"/></svg>
<svg style="left:1034px;top:575px" width="16" height="18" viewBox="0 0 16 18"><path class="w" d="M2 10.4 V2 a1 1 0 0 1 1 -1 H13 a1 1 0 0 1 1 1 V10.4"/><path class="b" d="M1 14.6 H6 M3 12.6 L1 14.6 L3 16.6 M10 14.6 H15 M13 12.6 L15 14.6 L13 16.6"/></svg>
<svg style="left:1067px;top:583px" width="13" height="2" viewBox="0 0 13 2"><path d="M0.5 1 H12.5" stroke="#f0f0f0" stroke-width="1.2"/></svg>
<div class="t st" style="left:1094px;letter-spacing:-0.05px">Zoom 100%</div>
<svg style="left:1171px;top:578px" width="13" height="13" viewBox="0 0 13 13"><path d="M0.5 6.5 H12.5 M6.5 0.5 V12.5" stroke="#f0f0f0" stroke-width="1.2"/></svg>
<!-- AI button -->
<div class="a" style="left:1120px;top:520px;width:64px;height:64px;border-radius:13px;background:#ff6f3d"></div>
<svg style="left:1120px;top:520px" width="64" height="64" viewBox="0 0 64 64"><path d="M31.2 20 A1 1 0 0 1 33.2 20 C33.3 27.2 36.9 30.8 44.1 30.9 A1 1 0 0 1 44.1 32.9 C36.9 33 33.3 36.6 33.2 43.8 A1 1 0 0 1 31.2 43.8 C31.1 36.6 27.5 33 20.3 32.9 A1 1 0 0 1 20.3 30.9 C27.5 30.8 31.1 27.2 31.2 20 Z" fill="none" stroke="#fff" stroke-width="1.7" stroke-linejoin="round"/><path d="M43.4 20.2 V26.2 M40.4 23.2 H46.4" stroke="#fff" stroke-width="1.4" stroke-linecap="round"/><path d="M21.4 38.6 L23 40.2 L21.4 41.8 L19.8 40.2 Z" fill="#fff" stroke="#fff" stroke-width="0.8" stroke-linejoin="round"/></svg>
</div>
</body>
</html>
